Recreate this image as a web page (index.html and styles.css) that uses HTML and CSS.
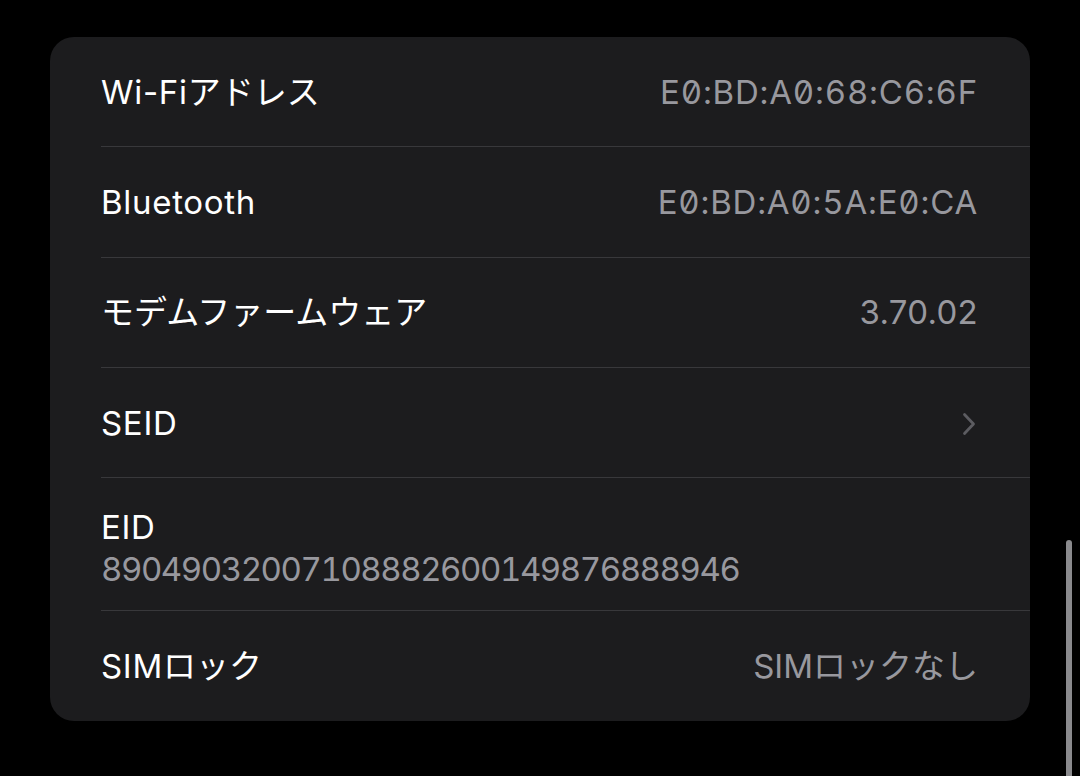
FILE: index.html
```html
<!DOCTYPE html>
<html lang="ja">
<head>
<meta charset="utf-8">
<link rel="stylesheet" href="styles.css">
</head>
<body>
<div class="card">
  <div class="row"><span class="label"><span class="lat">Wi-Fi</span>アドレス</span><span class="value mac">E0:BD:A0:68:C6:6F</span></div>
  <div class="row"><span class="label"><span class="lat">Bluetooth</span></span><span class="value mac">E0:BD:A0:5A:E0:CA</span></div>
  <div class="row"><span class="label">モデムファームウェア</span><span class="value ver">3.70.02</span></div>
  <div class="row"><span class="label"><span class="lat">SEID</span></span>
    <svg class="chevron" width="14" height="24" viewBox="0 0 14 24"><path d="M2.5 2.5 L11.5 12 L2.5 21.5" fill="none" stroke="#5c5c61" stroke-width="2.8" stroke-linecap="round" stroke-linejoin="round"/></svg>
  </div>
  <div class="row row-tall"><span class="label"><span class="lat">EID</span></span><span class="eid">89049032007108882600149876888946</span></div>
  <div class="row row-last"><span class="label"><span class="lat">SIM</span>ロック</span><span class="value">SIMロックなし</span></div>
</div>
<div class="scrollbar"></div>
</body>
</html>
```
FILE: styles.css
```css
html, body {
  margin: 0;
  padding: 0;
  background: #000;
  width: 1080px;
  height: 776px;
  overflow: hidden;
}
body {
  padding-top: 37px;
  padding-left: 50px;
  box-sizing: border-box;
  font-family: Inter, "Noto Sans CJK JP", sans-serif;
}
.card {
  width: 980px;
  background: #1c1c1e;
  border-radius: 24px;
  overflow: hidden;
}
.row {
  margin-left: 51px;
  padding-right: 52px;
  height: 110.3px;
  box-sizing: border-box;
  border-bottom: 1.5px solid #38383b;
  display: flex;
  align-items: center;
  justify-content: space-between;
}
.row-last {
  border-bottom: none;
  height: 110px;
}
.row-tall {
  height: 133px;
  flex-direction: column;
  align-items: flex-start;
  justify-content: flex-start;
  padding-top: 29px;
  gap: 2px;
}
.label {
  color: #ffffff;
  font-size: 33px;
  line-height: 40px;
}
.lat {
  letter-spacing: 0.7px;
}
.value {
  color: #98989e;
  font-size: 33px;
  line-height: 40px;
}
.mac {
  font-feature-settings: "zero" 1, "tnum" 1;
  letter-spacing: 0.8px;
}
.ver {
  font-feature-settings: "zero" 0, "tnum" 0;
  letter-spacing: 0.3px;
}
.eid {
  color: #98989e;
  font-size: 33px;
  line-height: 40px;
  font-feature-settings: "tnum" 1;
  letter-spacing: -1.45px;
}
.chevron {
  margin-right: 2px;
  margin-top: 3px;
}
.scrollbar {
  position: absolute;
  left: 1066px;
  top: 540px;
  width: 6px;
  height: 250px;
  border-radius: 3px;
  background: #8a8a8d;
}
```
